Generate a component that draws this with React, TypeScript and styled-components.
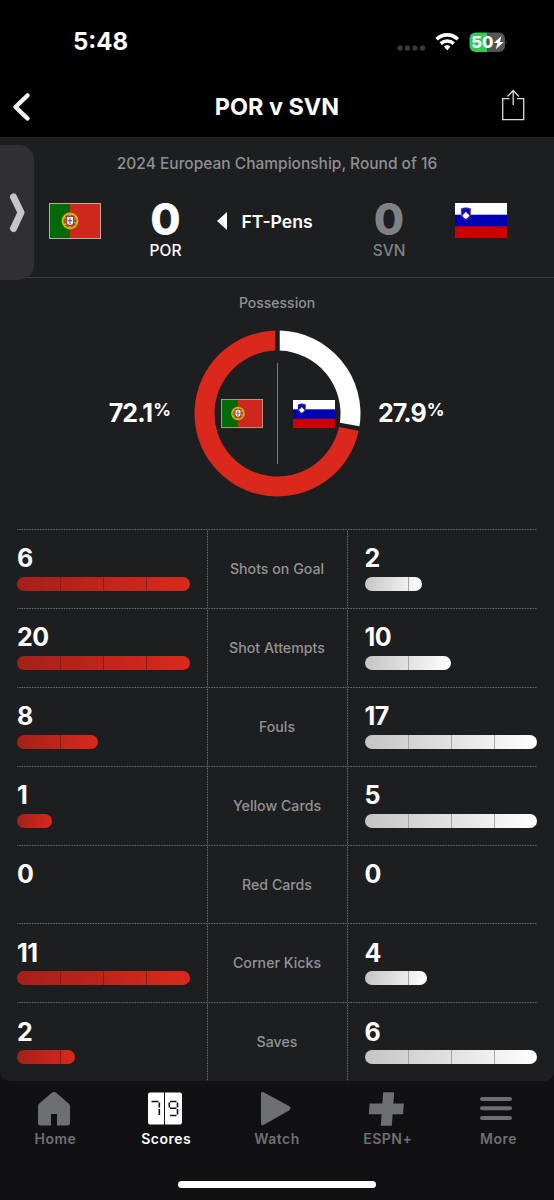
import React from "react";
import styled, { createGlobalStyle } from "styled-components";

const ui = `Inter, "Liberation Sans", sans-serif`;

const Global = createGlobalStyle`
  *, *::before, *::after { box-sizing: border-box; }
  html, body { margin: 0; background: #111113; }
`;

const Screen = styled.div`
  width: 554px;
  height: 1200px;
  display: flex;
  flex-direction: column;
  overflow: hidden;
  background: #111113;
  color: #fff;
  font-family: ${ui};
`;

const StatusBar = styled.div`
  height: 82px;
  flex: none;
  background: #000;
  display: flex;
  align-items: center;
  justify-content: space-between;
  padding: 2px 47px 0 73px;
`;

const Time = styled.span`
  font: 700 24px/30px ${ui};
`;

const StatusIcons = styled.div`
  display: flex;
  align-items: center;
`;

const NavBar = styled.header`
  height: 56px;
  flex: none;
  background: #000;
  border-bottom: 1px solid #242527;
  display: grid;
  grid-template-columns: 60px 1fr 60px;
  align-items: center;
  padding-bottom: 6px;
`;

const NavTitle = styled.h1`
  margin: 0;
  text-align: center;
  font: 700 23.4px/28px ${ui};
`;

const NavIcon = styled.div<{ $end?: boolean }>`
  display: flex;
  justify-content: ${(p) => (p.$end ? "flex-end" : "flex-start")};
  padding: ${(p) => (p.$end ? "0 29px 3px 0" : "0 0 0 12px")};
`;

const Panel = styled.main`
  flex: none;
  height: 943px;
  overflow: hidden;
  border-radius: 0 0 9px 9px;
  background: #1d1e20;
  position: relative;
`;

const ScoreHeader = styled.section`
  height: 140px;
  border-bottom: 1px solid #3c3d40;
  padding-top: 15px;
`;

const Competition = styled.div`
  text-align: center;
  color: #8f9092;
  font-size: 15.5px;
  line-height: 22px;
  font-weight: 500;
`;

const Matchup = styled.div`
  display: grid;
  grid-template-columns: 48.5px 52px 130px 93px 131px 52px;
  align-items: start;
  padding-top: 28px;
`;

const FlagCell = styled.div<{ $col: number }>`
  grid-column: ${(p) => p.$col};
  display: flex;
`;

const Score = styled.div<{ $dim?: boolean }>`
  color: ${(p) => (p.$dim ? "#808184" : "#fff")};
  display: flex;
  flex-direction: column;
  align-items: center;
  margin-top: -7px;
`;

const Goals = styled.span`
  font-size: 44px;
  line-height: 46px;
  font-weight: 800;
`;

const Abbr = styled.span`
  font-size: 15.5px;
  line-height: 17px;
  font-weight: 500;
`;

const Result = styled.div`
  display: flex;
  align-items: center;
  gap: 15px;
  height: 36px;
  margin-left: -14px;
  font-size: 17.6px;
  font-weight: 600;
  white-space: nowrap;
`;

const DrawerHandle = styled.div`
  position: absolute;
  left: 0;
  top: 7px;
  width: 34px;
  height: 135px;
  border-radius: 0 15px 15px 0;
  background: #303032;
  display: flex;
  align-items: center;
  padding-left: 9px;
`;

const Possession = styled.section`
  height: 251px;
  display: flex;
  flex-direction: column;
  align-items: center;
  padding-top: 15px;
`;

const SectionLabel = styled.div`
  color: #929395;
  font-size: 14px;
  line-height: 20px;
  font-weight: 500;
`;

const PossessionRow = styled.div`
  width: 100%;
  margin-top: 17px;
  display: grid;
  grid-template-columns: 194px 167px 193px;
  align-items: center;
`;

const Percent = styled.div<{ $side: "home" | "away" }>`
  display: flex;
  align-items: flex-start;
  justify-content: ${(p) => (p.$side === "home" ? "flex-end" : "flex-start")};
  padding: ${(p) => (p.$side === "home" ? "0 23px 2px 0" : "0 0 2px 17px")};
  font-size: 25px;
  line-height: 30px;
  font-weight: 700;
  letter-spacing: -0.9px;
`;

const PercentSign = styled.span`
  font-size: 17.5px;
  line-height: 23px;
  font-weight: 700;
  letter-spacing: 0;
  padding-left: 1px;
`;

const Donut = styled.div`
  display: grid;
  width: 167px;
  height: 167px;
  > * { grid-area: 1 / 1; }
`;

const DonutFlags = styled.div`
  display: flex;
  align-items: center;
  justify-content: space-between;
  padding: 1px 26px 0 26.5px;
`;

const dotted = (angle: string) =>
  `repeating-linear-gradient(${angle}, #707175 0, #28292b 1.3px, #707175 2.633px)`;

const Table = styled.section`
  margin: 0 17px;
  height: 553px;
  background:
    ${dotted("180deg")} 190px 0 / 1px 100% no-repeat,
    ${dotted("180deg")} 329.5px 0 / 1px 100% no-repeat;
`;

const StatRow = styled.div`
  height: 78.9px;
  display: grid;
  grid-template-columns: 190px 140px 190px;
  background: ${dotted("90deg")} 0 0 / 100% 1px no-repeat;
`;

const StatSide = styled.div<{ $away?: boolean }>`
  padding: 14.4px 0 0 ${(p) => (p.$away ? "17.5px" : "0")};
`;

const StatValue = styled.div`
  font-size: 25px;
  line-height: 31px;
  font-weight: 700;
  height: 33.6px;
  letter-spacing: -0.5px;
`;

const Track = styled.div`
  width: 172.8px;
  height: 14px;
`;

const Bar = styled.div<{ $away?: boolean }>`
  height: 100%;
  border-radius: 7px;
  background:
    repeating-linear-gradient(
      90deg,
      transparent 0 42px,
      ${(p) => (p.$away ? "#a5a5a5" : "#8c1c17")} 42px 43px
    ) 1px 0 / 135px 100% no-repeat,
    ${(p) => (p.$away ? "linear-gradient(100deg, #c4c4c4, #fff)" : "linear-gradient(100deg, #a3201a, #da291c)")};
`;

const StatName = styled.div`
  display: flex;
  align-items: center;
  justify-content: center;
  color: #929395;
  font-size: 14.2px;
  font-weight: 500;
`;

const TabBar = styled.nav`
  flex: none;
  height: 100px;
  display: grid;
  grid-template-columns: repeat(5, 1fr);
  padding-top: 10px;
`;

const Tab = styled.div<{ $active?: boolean }>`
  color: ${(p) => (p.$active ? "#fff" : "#6e6f72")};
  display: flex;
  flex-direction: column;
  align-items: center;
  font: 600 14px/20px ${ui};
  letter-spacing: 0.5px;
  > svg { margin: 0 3px 3px 0; }
`;

const HomeIndicator = styled.div`
  flex: none;
  width: 198px;
  height: 7px;
  border-radius: 4px;
  background: #fff;
  margin-left: 178px;
`;

const PortugalFlag = ({ width }: { width: number }) => (
  <svg width={width} height={(width * 36) / 52} viewBox="0 0 52 36">
    <rect width="52" height="36" fill="#c3a7a2" />
    <rect x="1" y="1" width="20" height="34" fill="#046a08" />
    <rect x="21" y="1" width="30" height="34" fill="#d0271c" />
    <circle cx="21" cy="18" r="7.5" fill="#8f6a18" stroke="#cdb51b" strokeWidth="1.8" />
    <path d="M14 15c5-3 9 6 14 5M14 21c5 3 9-8 14-6M21 10v16" fill="none" stroke="#d8b81c" strokeWidth="1.3" />
    <path d="M16.800 13h8.400v6.500c0 5-8.400 5-8.400 0z" fill="#d52b1e" />
    <path d="M18 14h6v5c0 4-6 4-6 0z" fill="#fff" />
    <path d="M21 14.800v6.400M18.800 17.600h4.400" stroke="#4560b0" strokeWidth="1.200" />
  </svg>
);

const SloveniaFlag = ({ width }: { width: number }) => (
  <svg width={width} height={(width * 35) / 52} viewBox="0 0 52 35">
    <rect width="52" height="12" fill="#fff" />
    <rect y="11.7" width="52" height="12" fill="#0000b4" />
    <rect y="23.3" width="52" height="11.7" fill="#cb0000" />
    <path d="M6.2 5.5q4.8-1.700 9.400 0v5.200c0 3.200-2.300 5.200-4.700 6.200-2.400-1-4.700-3-4.700-6.200z" fill="#0a12ae" stroke="#b83c62" strokeWidth=".6" />
    <path d="M7.400 12.200l1.800-1.500 1.700-1.900 1.700 1.900 1.800 1.500c-.7 1.900-2 3-3.500 3.700-1.500-.7-2.800-1.800-3.500-3.700z" fill="#fff" />
  </svg>
);

const PossessionRing = ({ away }: { away: number }) => {
  const c = 83.5;
  const ro = 83;
  const ri = 63;
  const pt = (r: number, a: number) => `${c + r * Math.sin(a)} ${c - r * Math.cos(a)}`;
  const arc = (from: number, to: number) => {
    const go = 2.25 / ro;
    const gi = 2.25 / ri;
    const large = to - from > Math.PI ? 1 : 0;
    return `M${pt(ro, from + go)}A${ro} ${ro} 0 ${large} 1 ${pt(ro, to - go)}L${pt(ri, to - gi)}A${ri} ${ri} 0 ${large} 0 ${pt(ri, from + gi)}Z`;
  };
  const split = (away / 100) * Math.PI * 2;
  return (
    <svg width="167" height="167" viewBox="0 0 167 167">
      <path d={arc(0, split)} fill="#fff" />
      <path d={arc(split, Math.PI * 2)} fill="#da291c" />
      <path d="M83.5 33v101" stroke="#77787a" />
    </svg>
  );
};

const stats = [
  { name: "Shots on Goal", home: 6, away: 2 },
  { name: "Shot Attempts", home: 20, away: 10 },
  { name: "Fouls", home: 8, away: 17 },
  { name: "Yellow Cards", home: 1, away: 5 },
  { name: "Red Cards", home: 0, away: 0 },
  { name: "Corner Kicks", home: 11, away: 4 },
  { name: "Saves", home: 2, away: 6 },
];

const share = (v: number, o: number) => (v ? `${(v / Math.max(v, o)) * 100}%` : "0");

export default function App() {
  return (
    <Screen>
      <Global />
      <StatusBar>
        <Time>5:48</Time>
        <StatusIcons>
          <svg width="112" height="24" viewBox="0 0 112 24">
            <g fill="#3b3b3d">
              <rect x="2.5" y="15.5" width="5" height="5" rx="1.6" />
              <rect x="10" y="15.5" width="5" height="5" rx="1.6" />
              <rect x="17.5" y="15.5" width="5" height="5" rx="1.6" />
              <rect x="25" y="15.5" width="5" height="5" rx="1.6" />
            </g>
            <g fill="none" stroke="#fff" strokeWidth="3.6">
              <path d="M41.600 9.200a15.200 15.200 0 0 1 21.200 0" />
              <path d="M45.700 13.600a9.400 9.400 0 0 1 13 0" />
            </g>
            <path d="M48.900 16.600a4.800 4.800 0 0 1 6.600 0L52.200 20.500z" fill="#fff" />
            <path d="M80.500 2.500H92.500v19.500H80.500a6 6 0 0 1-6-6V8.500a6 6 0 0 1 6-6z" fill="#34c759" />
            <path d="M92.500 2.500h11.500a6 6 0 0 1 6 6v7.500a6 6 0 0 1-6 6H92.500z" fill="#545456" />
            <path d="M110.800 9.500v5.500q1.400-2.700 0-5.500z" fill="#545456" />
            <text x="76.300" y="18" fill="#fff" fontFamily="Inter, sans-serif" fontWeight="800" fontSize="16.500">50</text>
            <path d="M106.500 6l-7.700 7h3.700l-1.700 6.300 8-7.300h-4z" fill="#fff" />
          </svg>
        </StatusIcons>
      </StatusBar>
      <NavBar>
        <NavIcon>
          <svg width="20" height="30" viewBox="0 0 20 30" fill="none" stroke="#f1f1f1" strokeWidth="4.500" strokeLinecap="round" strokeLinejoin="round">
            <path d="M15.500 3.500L3.500 15l12 11.500" />
          </svg>
        </NavIcon>
        <NavTitle>POR v SVN</NavTitle>
        <NavIcon $end>
          <svg width="24" height="32" viewBox="0 0 24 32" fill="none" stroke="#dcdcdc" strokeWidth="1.300">
            <path d="M8.500 9.700H1.700v21h21v-21h-6.800M12.200 16V2M6.500 7.500l5.700-6 5.700 6" />
          </svg>
        </NavIcon>
      </NavBar>
      <Panel>
        <ScoreHeader>
          <Competition>2024 European Championship, Round of 16</Competition>
          <Matchup>
            <FlagCell $col={2}><PortugalFlag width={52} /></FlagCell>
            <Score><Goals>0</Goals><Abbr>POR</Abbr></Score>
            <Result>
              <svg width="10" height="18" viewBox="0 0 10 18"><path d="M10 0v18L0 9z" fill="#fff" /></svg>
              FT-Pens
            </Result>
            <Score $dim><Goals>0</Goals><Abbr>SVN</Abbr></Score>
            <FlagCell $col={6}><SloveniaFlag width={52} /></FlagCell>
          </Matchup>
        </ScoreHeader>
        <Possession>
          <SectionLabel>Possession</SectionLabel>
          <PossessionRow>
            <Percent $side="home">72.1<PercentSign>%</PercentSign></Percent>
            <Donut>
              <PossessionRing away={27.9} />
              <DonutFlags><PortugalFlag width={42} /><SloveniaFlag width={42} /></DonutFlags>
            </Donut>
            <Percent $side="away">27.9<PercentSign>%</PercentSign></Percent>
          </PossessionRow>
        </Possession>
        <Table>
          {stats.map((s) => (
            <StatRow key={s.name}>
              <StatSide>
                <StatValue>{s.home}</StatValue>
                <Track><Bar style={{ width: share(s.home, s.away) }} /></Track>
              </StatSide>
              <StatName>{s.name}</StatName>
              <StatSide $away>
                <StatValue>{s.away}</StatValue>
                <Track><Bar $away style={{ width: share(s.away, s.home) }} /></Track>
              </StatSide>
            </StatRow>
          ))}
        </Table>
        <DrawerHandle>
          <svg width="17" height="42" viewBox="0 0 17 42" fill="none" stroke="#c5c5ca" strokeWidth="7" strokeLinecap="round" strokeLinejoin="round">
            <path d="M4.500 5l7.500 15.500L4.500 36.500" />
          </svg>
        </DrawerHandle>
      </Panel>
      <TabBar>
        <Tab>
          <svg width="34" height="35" viewBox="0 0 34 35">
            <path d="M14.800 1.800q2.200-1.800 4.400 0L32 12.800q1 1 1 2.500V32q0 2.500-2.500 2.500H20V23h-6v11.500H3.500Q1 34.500 1 32V15.300q0-1.500 1-2.500z" fill="currentColor" />
          </svg>
          Home
        </Tab>
        <Tab $active>
          <svg width="36" height="35" viewBox="0 0 36 35">
            <path d="M3 1.500h14v32H3q-2 0-2-2v-28q0-2 2-2zM18 1.500h15q2 0 2 2v28q0 2-2 2H18z" fill="currentColor" />
            <path d="M4.500 10.500H11.500M12.300 11.500v5M12.300 18v6M23 10.500H29.500M22.300 11.500v5M30.500 11.500v5M23 17.300H29.500M30.500 18v5.500M23 24.500H29.500" fill="none" stroke="#111113" strokeWidth="1.600" />
          </svg>
          Scores
        </Tab>
        <Tab>
          <svg width="36" height="35" viewBox="0 0 36 35">
            <path d="M4 2.500q0-2.500 2.500-1.300L32 15q3 2.200 0 4.500L6.500 34Q4 35 4 32z" fill="currentColor" />
          </svg>
          Watch
        </Tab>
        <Tab>
          <svg width="36" height="35" viewBox="0 0 36 35">
            <path d="M15.200 1.300h11l-.8 11.200h10.400l-.8 10.800H24.600l-.8 11.500h-11l.8-11.500H.8l.8-10.800h12.800z" fill="currentColor" />
          </svg>
          ESPN+
        </Tab>
        <Tab>
          <svg width="36" height="35" viewBox="0 0 36 35" stroke="currentColor" strokeWidth="4" strokeLinecap="round">
            <path d="M3 8h28M3 17.300h28M3 27h28" />
          </svg>
          More
        </Tab>
      </TabBar>
      <HomeIndicator />
    </Screen>
  );
}
